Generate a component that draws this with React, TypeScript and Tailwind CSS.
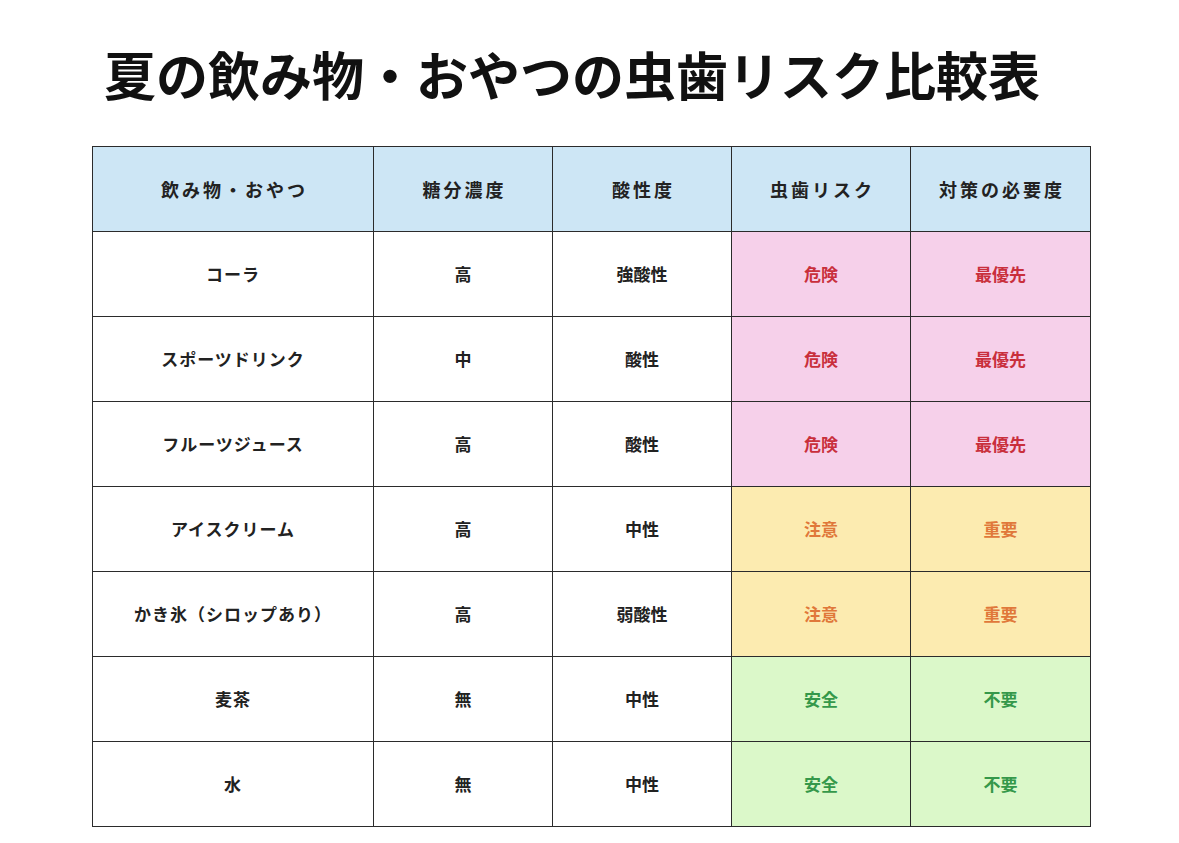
const rows = [
  { name: 'コーラ', sugar: '高', acid: '強酸性', risk: '危険', need: '最優先', level: 'high' },
  { name: 'スポーツドリンク', sugar: '中', acid: '酸性', risk: '危険', need: '最優先', level: 'high' },
  { name: 'フルーツジュース', sugar: '高', acid: '酸性', risk: '危険', need: '最優先', level: 'high' },
  { name: 'アイスクリーム', sugar: '高', acid: '中性', risk: '注意', need: '重要', level: 'mid' },
  { name: 'かき氷（シロップあり）', sugar: '高', acid: '弱酸性', risk: '注意', need: '重要', level: 'mid' },
  { name: '麦茶', sugar: '無', acid: '中性', risk: '安全', need: '不要', level: 'low' },
  { name: '水', sugar: '無', acid: '中性', risk: '安全', need: '不要', level: 'low' },
];

const levelStyle: Record<string, string> = {
  high: 'bg-[#f6d0ea] text-[#c92f3c]',
  mid: 'bg-[#fcebb0] text-[#e0783a]',
  low: 'bg-[#dbf8c9] text-[#35984a]',
};

const headers = ['飲み物・おやつ', '糖分濃度', '酸性度', '虫歯リスク', '対策の必要度'];
const widths = ['w-[281px]', 'w-[179px]', 'w-[179px]', 'w-[179px]', 'w-[180px]'];

export default function App() {
  return (
    <div
      className="w-[1179px] h-[843px] bg-white overflow-hidden"
      style={{ fontFamily: '"Noto Sans CJK JP", "Noto Sans", sans-serif' }}
    >
      <h1 className="pl-[104px] pt-[41px] h-[146px] text-[52px] leading-[66px] font-bold text-[#111]">
        夏の飲み物・おやつの虫歯リスク比較表
      </h1>

      <table className="ml-[92px] border-collapse table-fixed w-[998px]">
        <thead>
          <tr className="h-[85px] bg-[#cde6f5]">
            {headers.map((h, i) => (
              <th
                key={h}
                className={`${widths[i]} border-[1.5px] border-[#2b2b2b] text-[18px] font-bold tracking-[3px] text-[#222] text-center`}
              >
                <span className="mr-[-3px]">{h}</span>
              </th>
            ))}
          </tr>
        </thead>
        <tbody>
          {rows.map((r) => (
            <tr key={r.name} className="h-[85px]">
              <td className="border-[1.5px] border-[#2b2b2b] text-[17px] font-bold tracking-[1px] text-[#222] text-center">
                {r.name}
              </td>
              <td className="border-[1.5px] border-[#2b2b2b] text-[17px] font-bold text-[#222] text-center">
                {r.sugar}
              </td>
              <td className="border-[1.5px] border-[#2b2b2b] text-[17px] font-bold text-[#222] text-center">
                {r.acid}
              </td>
              <td className={`border-[1.5px] border-[#2b2b2b] text-[17px] font-bold text-center ${levelStyle[r.level]}`}>
                {r.risk}
              </td>
              <td className={`border-[1.5px] border-[#2b2b2b] text-[17px] font-bold text-center ${levelStyle[r.level]}`}>
                {r.need}
              </td>
            </tr>
          ))}
        </tbody>
      </table>
    </div>
  );
}
